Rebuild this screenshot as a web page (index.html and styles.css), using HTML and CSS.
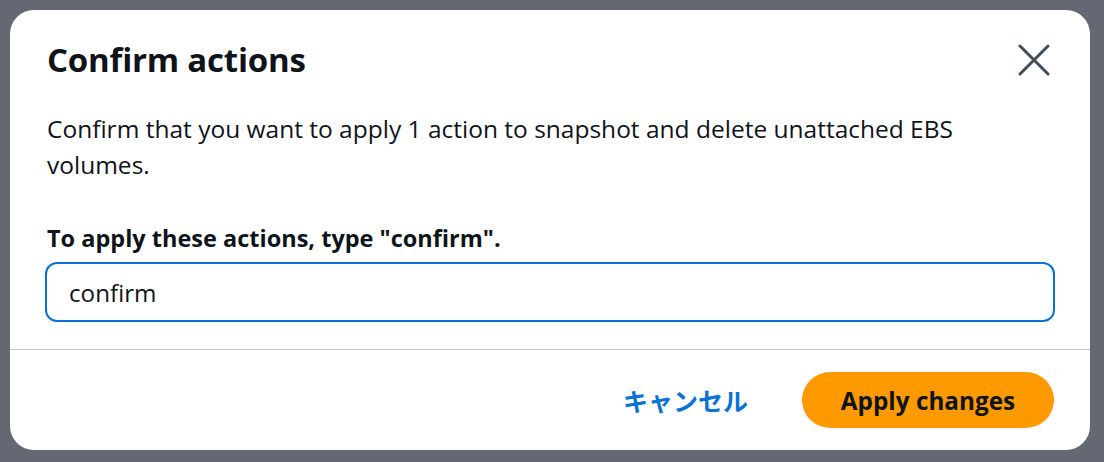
FILE: index.html
```html
<!DOCTYPE html>
<html lang="en">
<head>
<meta charset="utf-8">
<title>Confirm actions</title>
<link rel="stylesheet" href="styles.css">
</head>
<body>
<div class="overlay">
  <div class="modal" role="dialog" aria-labelledby="modal-title">
    <div class="modal-header">
      <h2 class="modal-title" id="modal-title">Confirm actions</h2>
      <button class="close-btn" aria-label="Close">
        <svg width="32" height="32" viewBox="0 0 32 32" aria-hidden="true">
          <path d="M2 2 L30 30 M30 2 L2 30" stroke="#414d5c" stroke-width="3" stroke-linecap="round" fill="none"/>
        </svg>
      </button>
    </div>
    <div class="modal-body">
      <p class="description">Confirm that you want to apply 1 action to snapshot and delete unattached EBS volumes.</p>
      <label class="field-label" for="confirm-input">To apply these actions, type "confirm".</label>
      <input class="field-input" id="confirm-input" type="text" value="confirm">
    </div>
    <div class="modal-footer">
      <button class="btn-link">キャンセル</button>
      <button class="btn-primary">Apply changes</button>
    </div>
  </div>
</div>
</body>
</html>
```
FILE: styles.css
```css
* { box-sizing: border-box; }
html, body {
  margin: 0;
  padding: 0;
  background: #646873;
  font-family: "Open Sans", "Noto Sans CJK JP", sans-serif;
  color: #0f141a;
}
.overlay {
  width: 1104px;
  height: 462px;
  padding: 10px 14px 12px 10px;
}
.modal {
  width: 1080px;
  height: 440px;
  background: #ffffff;
  border-radius: 24px;
  display: flex;
  flex-direction: column;
}
.modal-header {
  display: flex;
  justify-content: space-between;
  align-items: center;
  padding: 30px 40px 0 37px;
}
.modal-title {
  margin: 0;
  font-size: 33px;
  font-weight: 700;
  line-height: 40px;
  letter-spacing: -0.2px;
}
.close-btn {
  background: none;
  border: 0;
  padding: 0;
  width: 32px;
  height: 32px;
  display: flex;
  align-items: center;
  justify-content: center;
}
.modal-body {
  padding: 31px 35px 0 35px;
  display: flex;
  flex-direction: column;
}
.description {
  margin: 0 0 0 2px;
  font-size: 24.5px;
  line-height: 36px;
  max-width: 980px;
}
.field-label {
  margin: 39px 0 0 2px;
  font-size: 23.5px;
  line-height: 32px;
  font-weight: 700;
}
.field-input {
  margin-top: 8px;
  height: 60px;
  width: 100%;
  border: 2px solid #0972d3;
  border-radius: 12px;
  padding: 0 22px;
  font-family: inherit;
  font-size: 24.2px;
  color: #0f141a;
  outline: none;
}
.modal-footer {
  margin-top: 27px;
  border-top: 1px solid #c6c6cd;
  flex: 1;
  display: flex;
  justify-content: flex-end;
  align-items: center;
  gap: 54px;
  padding: 0 36px 0 0;
}
.btn-link {
  background: none;
  border: 0;
  padding: 0;
  color: #0972d3;
  font-family: "Noto Sans CJK JP", sans-serif;
  font-size: 25px;
  font-weight: 700;
}
.btn-primary {
  background: #ff9900;
  border: 0;
  border-radius: 28px;
  width: 252px;
  height: 56px;
  font-family: inherit;
  font-size: 24.3px;
  font-weight: 700;
  color: #0f141a;
}
```
